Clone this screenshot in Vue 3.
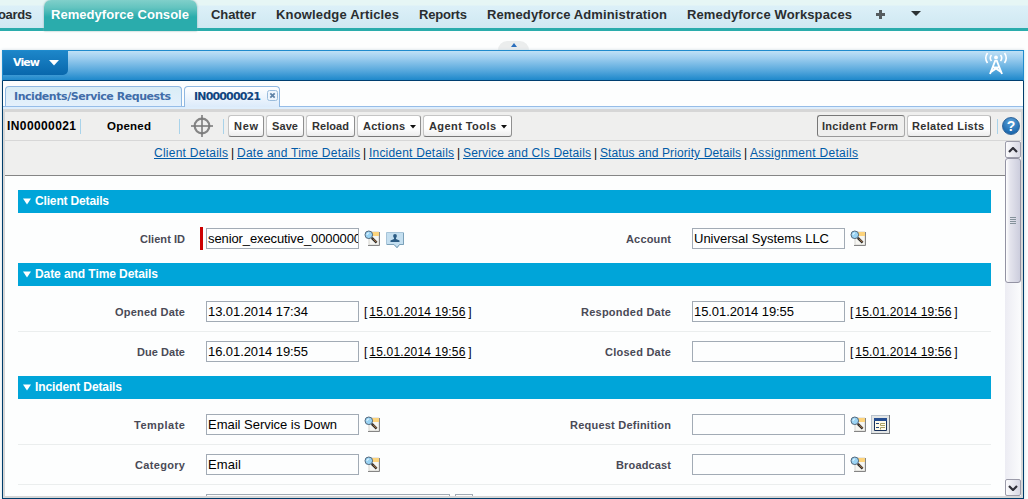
<script setup>
const nav = [
  { text: 'Chatter', width: 45 },
  { text: 'Knowledge Articles', width: 123 },
  { text: 'Reports', width: 48 },
  { text: 'Remedyforce Administration', width: 180 },
  { text: 'Remedyforce Workspaces', width: 165 },
]
const buttons = [
  { text: 'New', width: 24, box: 36 },
  { text: 'Save', width: 26, box: 38 },
  { text: 'Reload', width: 37, box: 49 },
  { text: 'Actions', width: 42, box: 64, menu: true },
  { text: 'Agent Tools', width: 67, box: 89, menu: true },
]
const links = [
  { text: 'Client Details', width: 74 },
  { text: 'Date and Time Details', width: 123 },
  { text: 'Incident Details', width: 85 },
  { text: 'Service and CIs Details', width: 128 },
  { text: 'Status and Priority Details', width: 141 },
  { text: 'Assignment Details', width: 108 },
]
const stamp = '15.01.2014 19:56'
const sections = [
  {
    title: 'Client Details', width: 74,
    rows: [[
      { label: 'Client ID', lw: 45, value: 'senior_executive_0000000', vw: 153, required: true, icons: ['lookup', 'card'] },
      { label: 'Account', lw: 45, value: 'Universal Systems LLC', vw: 135, icons: ['lookup'] },
    ]],
  },
  {
    title: 'Date and Time Details', width: 123,
    rows: [
      [
        { label: 'Opened Date', lw: 70, value: '13.01.2014 17:34', vw: 100, stamp },
        { label: 'Responded Date', lw: 90, value: '15.01.2014 19:55', vw: 100, stamp },
      ],
      [
        { label: 'Due Date', lw: 48, value: '16.01.2014 19:55', vw: 100, stamp },
        { label: 'Closed Date', lw: 66, value: '', stamp },
      ],
    ],
  },
  {
    title: 'Incident Details', width: 87,
    rows: [
      [
        { label: 'Template', lw: 51, value: 'Email Service is Down', vw: 129, icons: ['lookup'] },
        { label: 'Request Definition', lw: 101, value: '', icons: ['lookup', 'form'] },
      ],
      [
        { label: 'Category', lw: 50, value: 'Email', vw: 33, icons: ['lookup'] },
        { label: 'Broadcast', lw: 55, value: '', icons: ['lookup'] },
      ],
      [{ label: '', lw: 0, value: '', wide: true }],
    ],
  },
]

// Tracks a line of text out (or in) to the given width.
const vFit = {
  mounted(el, { value }) {
    const n = el.textContent.length
    if (!value || n < 2) return
    const natural = el.getBoundingClientRect().width
    const gap = (value - natural) / (n - 1)
    el.style.letterSpacing = gap + 'px'
    el.style.marginRight = -gap + 'px'
  },
}
</script>

<template>
  <div class="page">
    <nav class="nav">
      <div class="lead"><span v-fit="34">oards</span></div>
      <div class="active"><span v-fit="138">Remedyforce Console</span></div>
      <a v-for="n in nav" :key="n.text" :style="{ width: n.width + 'px' }"><span v-fit="n.width">{{ n.text }}</span></a>
      <svg class="plus" width="11" height="11"><path d="M4 1h3v3h3v3H7v3H4V7H1V4h3z" fill="#555c5f" /></svg>
      <svg class="more" width="11" height="6"><path d="M0 0h10L5 5z" fill="#2b3133" /></svg>
    </nav>
    <div class="handle-row"><div class="handle"><svg width="6" height="4"><path d="M3 0l3 4H0z" fill="#2b6fbd" /></svg></div></div>

    <div class="console">
      <header class="head">
        <div class="view"><span v-fit="27">View</span><svg width="10" height="6"><path d="M0 0h10L5 5.5z" fill="#fff" /></svg></div>
        <svg class="antenna" width="24" height="24" fill="none" stroke="#fff" stroke-width="1.6">
          <path d="M3.500 1Q0 6 3.500 11M7.500 3Q5 6 7.500 9M20.500 1q3.500 5 0 10M16.500 3q2.500 3 0 6" />
          <path d="M11.500 8L6 22M12.500 8L18 22M9 15.500h6M7 20l5-3.500 5 3.500" stroke-width="1.9" />
          <circle cx="12" cy="5.500" r="1.900" fill="#fff" stroke="none" />
        </svg>
      </header>
      <div class="tabs">
        <div class="tab first"><span v-fit="157">Incidents/Service Requests</span></div>
        <div class="tab on"><span v-fit="67">IN00000021</span>
          <svg class="close" width="11" height="11"><rect x=".5" y=".5" width="10" height="10" rx="2" fill="#eff6fd" stroke="#9abcdc" /><path d="M3.300 3.300l4.400 4.400M7.700 3.300L3.300 7.700" stroke="#5e82a6" stroke-width="1.700" /></svg>
        </div>
      </div>
      <div class="strip"></div>

      <div class="frame">
        <div class="toolbar">
          <b class="number"><span v-fit="69">IN00000021</span></b><i class="sep"></i>
          <b class="status"><span v-fit="44">Opened</span></b><i class="sep"></i>
          <svg class="target" width="22" height="22" fill="none" stroke="#858585"><circle cx="11" cy="11" r="7.300" stroke-width="2.200" /><path d="M11 0v22M0 11h22" stroke="#777" stroke-width="1.500" /></svg>
          <i class="sep"></i>
          <div class="buttons">
            <button v-for="b in buttons" :key="b.text" :style="{ width: b.box + 'px' }"><span v-fit="b.width">{{ b.text }}</span><svg v-if="b.menu" width="6" height="4"><path d="M0 0h6L3 3.500z" fill="#111" /></svg></button>
          </div>
          <div class="right">
            <button class="pressed"><span v-fit="76">Incident Form</span></button>
            <button class="lists"><span v-fit="72">Related Lists</span></button>
            <i class="sep"></i>
            <div class="help">?</div>
          </div>
        </div>

        <div class="body">
          <main class="main">
            <div class="links">
              <template v-for="(l, i) in links" :key="l.text"><span v-if="i" class="bar">|</span><a :style="{ width: l.width + 'px' }"><span v-fit="l.width">{{ l.text }}</span></a></template>
            </div>
            <div class="form">
              <section v-for="s in sections" :key="s.title">
                <h3><svg width="8" height="7"><path d="M0 .5h8L4 6.500z" fill="#fff" /></svg><span v-fit="s.width">{{ s.title }}</span></h3>
                <div v-for="(r, i) in s.rows" :key="i" class="row">
                  <div v-for="(f, j) in r" :key="j" class="cell">
                    <label><span v-fit="f.lw">{{ f.label }}</span></label>
                    <i class="req" :class="{ shown: f.required }"></i>
                    <div class="input" :class="{ wide: f.wide }"><span v-fit="f.vw">{{ f.value }}</span></div>
                    <div v-if="f.wide" class="stub"></div>
                    <div v-if="f.stamp" class="stamp">[<a><span v-fit="96">{{ f.stamp }}</span></a>]</div>
                    <template v-for="k in f.icons" :key="k">
                      <svg v-if="k === 'lookup'" class="lookup" width="17" height="17">
                        <path d="M5 2h10v13H5z" fill="#f6f6f2" stroke="#d4d4d0" /><path d="M8 2h7v4H8z" fill="#fdd47c" />
                        <path d="M15.500 2v13.500H4" fill="none" stroke="#858585" />
                        <circle cx="4.800" cy="4.800" r="3.800" fill="#9bd4f4" stroke="#53687c" /><path d="M3 5q0-2 2-2" stroke="#e9f8ff" fill="none" />
                        <path d="M7.800 7.800l4.800 4.800" stroke="#282828" stroke-width="2.400" /><path d="M9 8.700l3.500 3.500" stroke="#c68a50" stroke-width="1" />
                      </svg>
                      <svg v-else-if="k === 'card'" class="card" width="20" height="18">
                        <path d="M1.500 1.500h17v12h-4L12 17l-3-3.500H1.500z" fill="#c4dff0" stroke="#a7c4d8" /><path d="M2 13.500h7l3 3 2.500-3h4V2" fill="none" stroke="#7ba1b9" />
                        <circle cx="10" cy="5" r="1.900" fill="#2c5c84" /><path d="M5.500 11V9.500L9 8V6h2v2l3.500 1.500V11z" fill="#2c5c84" />
                      </svg>
                      <svg v-else class="formicon" width="19" height="19">
                        <path d="M0 0h19v19H0z" fill="#74797e" /><path d="M0 0h18v18H0z" fill="#b9c3cd" /><path d="M1 1h17v17H1z" fill="#e3e6e6" />
                        <path d="M3.500 3.500h12v12h-12z" fill="#fffbea" stroke="#17305b" /><path d="M3 3h13v3H3z" fill="#244d91" />
                        <path d="M5 8.500h3M5 12.500h3" stroke="#26487d" /><path d="M14 8.500H9.500v2H14M14 12.500H9.500v2" stroke="#aaa164" fill="none" />
                      </svg>
                    </template>
                  </div>
                </div>
              </section>
            </div>
          </main>
          <aside class="scroll">
            <div class="sbtn"><svg width="10" height="6"><path d="M1 5l4-4 4 4" fill="none" stroke="#303039" stroke-width="2.200" /></svg></div>
            <div class="thumb"><i></i><i></i><i></i><i></i></div>
            <div class="sbtn low"><svg width="10" height="6"><path d="M1 1l4 4 4-4" fill="none" stroke="#303039" stroke-width="2.200" /></svg></div>
          </aside>
        </div>
      </div>
    </div>
  </div>
</template>

<style>
body { margin: 0; background: #fdfefe; }
</style>

<style scoped>
* { box-sizing: border-box; }
svg { display: block; flex: none; }
span { white-space: nowrap; }
.page { width: 1028px; height: 499px; overflow: hidden; display: flex; flex-direction: column; font-family: "Liberation Sans", Arial, sans-serif; color: #000; background: #fdfefe; }
.nav { flex: none; height: 31px; border-bottom: 3px solid #2aacac; background: linear-gradient(#e6f6f5 0 5px, #dcf0f8 6px, #cfe8f2); display: flex; font: bold 13px/29px "Liberation Sans", Arial, sans-serif; color: #2a2e30; }
.nav a { margin-right: 20px; flex: none; }
.lead { width: 44px; display: flex; justify-content: flex-end; padding-right: 12px; flex: none; }
.active { width: 153px; height: 31px; padding-left: 7px; margin-right: 14px; border-radius: 7px 7px 0 0; color: #fff; background: linear-gradient(#80cfca, #62c3bf 8px, #2aacac 17px); box-shadow: 0 0 2px #8aa; flex: none; }
.plus { margin: 9px 25px 0 3px; }
.more { margin-top: 11px; }
.handle-row { height: 19px; flex: none; display: flex; justify-content: center; align-items: flex-end; padding-right: 1px; }
.handle { width: 31px; height: 9px; border-radius: 9px 9px 0 0; background: #ebeded; display: flex; justify-content: center; padding-top: 2px; }
.console { margin-left: 2px; width: 1022px; height: 449px; border: 1px solid #003d6b; border-top: 0; display: flex; flex-direction: column; box-shadow: 0 0 3px #ccd9e2; background: #fdfefe; }
.head { flex: none; height: 31px; margin: 0 -1px; border: 1px solid #1f8bcd; border-bottom-color: #003f70; background: linear-gradient(#bfe0f6, #9dceef 7px, #55a7dc 20px, #1e88cb); display: flex; justify-content: space-between; }
.view { width: 65px; height: 24px; border-radius: 0 0 5px 0; background: linear-gradient(#1d86c9, #0867ac); color: #fff; font: bold 11px/24px "DejaVu Sans", Verdana, sans-serif; padding-left: 10px; display: flex; align-items: center; }
.view svg { margin-left: 9px; }
.antenna { margin: 1px 15px 0 0; }
.tabs { flex: none; height: 26px; padding: 5px 0 0 2px; display: flex; border-bottom: 1px solid #96bde8; font: bold 11px/20px "DejaVu Sans", Verdana, sans-serif; }
.tab { height: 20px; border: 1px solid #8fb8e2; border-bottom: 0; border-radius: 4px 4px 0 0; color: #416da9; background: linear-gradient(#d9edf6, #e4f0fc); display: flex; flex: none; }
.first { width: 177px; padding-left: 8px; margin-right: 2px; }
.on { width: 96px; height: 21px; padding-left: 9px; background: linear-gradient(#fff, #dcebfb); color: #114580; }
.close { margin: 3px 0 0 6px; }
.strip { flex: none; height: 2px; background: #dfeefc; }
.frame { flex: 1; min-height: 0; border: 2px solid #d6d6d6; border-top-width: 3px; display: flex; flex-direction: column; }
.toolbar { flex: none; height: 29px; background: #efefee; border-bottom: 1px solid #d7d7d7; display: flex; align-items: center; padding-left: 2px; }
.number { width: 73px; font-size: 12px; }
.number + .sep { margin-right: 26px; }
.status { width: 72px; font-size: 11.5px; }
.sep { width: 1px; height: 15px; background: #a9d3ea; flex: none; }
.target { margin: 0 10px 0 11px; }
.buttons { display: flex; gap: 2px; margin-left: 4px; }
button { height: 22px; padding: 0 0 0 5px; border: 1px solid #909090; border-top-color: #c5c5c5; border-left-color: #c5c5c5; border-bottom-color: #777; border-radius: 3px; background: linear-gradient(#fff 60%, #ededed); font: bold 11px/20px "Liberation Sans", Arial, sans-serif; color: #333; display: flex; align-items: center; flex: none; }
button svg { margin: 1px 0 0 5px; }
.right { margin-left: auto; display: flex; align-items: center; padding-right: 1px; }
.pressed { width: 88px; padding-left: 4px; margin-right: 2px; background: #efefee; border-color: #777 #aaa #999 #777; }
.lists { width: 84px; padding-left: 4px; margin-right: 6px; }
.help { width: 18px; height: 18px; margin-left: 4px; border-radius: 50%; background: radial-gradient(circle at 50% 25%, #5ba1d8, #1d69ae 75%); border: 1px solid #31669b; color: #fff; font: bold 14px/16px "Liberation Sans", Arial, sans-serif; text-align: center; }
.body { flex: 1; min-height: 0; display: flex; }
.main { width: 1000px; flex: none; overflow: hidden; }
.links { height: 35px; background: #efefee; border-bottom: 1px solid #858585; padding-left: 149px; display: flex; font-size: 12px; line-height: 24px; }
.links a { color: #015ba7; text-decoration: underline; flex: none; }
.bar { width: 9px; text-align: center; flex: none; }
.form { padding: 14px 0 0 13px; width: 986px; }
section { margin-bottom: 4px; }
h3 { margin: 0 0 6px; width: 973px; height: 23px; background: #00a5d9; color: #fff; font: bold 12px/23px "Liberation Sans", Arial, sans-serif; display: flex; align-items: center; padding-left: 5px; }
h3 svg { margin-right: 4px; }
.row { height: 40px; width: 973px; border-bottom: 1px solid #ebeeee; display: flex; }
.row:last-child { border-bottom-color: transparent; }
.cell { width: 486px; flex: none; display: flex; align-items: center; }
label { width: 167px; flex: none; display: flex; justify-content: flex-end; font-weight: bold; font-size: 11px; color: #4a4a56; padding-top: 1px; }
.req { width: 3px; height: 23px; margin: 0 3px 0 15px; flex: none; }
.shown { background: #c00; }
.input { width: 153px; height: 21px; border: 1px solid #a2abb5; background: #fdfefe; font-size: 13px; line-height: 19px; padding-left: 1px; overflow: hidden; flex: none; color: #000; }
.wide { width: 244px; }
.stub { width: 18px; height: 21px; margin-left: 5px; border: 1px solid #a2abb5; }
.stamp { margin-left: 5px; font-size: 12px; padding-top: 1px; display: flex; }
.stamp a { width: 96px; margin: 0 3px 0 2px; text-decoration: underline; }
.lookup { margin-left: 5px; }
.card { margin: 2px 0 0 4px; }
.formicon { margin-left: 4px; }
.scroll { width: 16px; background: linear-gradient(90deg, #ececf3, #fbfcfd); display: flex; flex-direction: column; }
.sbtn { height: 17px; border: 1px solid #9c9caa; border-radius: 2px; background: linear-gradient(90deg, #fbfbfd, #d8d8e4); display: flex; align-items: center; justify-content: center; flex: none; }
.thumb { height: 125px; border: 1px solid #9393a3; border-radius: 3px; background: linear-gradient(90deg, #fff, #e4e4ed 30%, #cccddd); display: flex; flex-direction: column; gap: 1px; align-items: center; justify-content: center; flex: none; }
.thumb i { width: 6px; height: 1px; background: #85929b; }
.low { margin-top: auto; }
</style>
